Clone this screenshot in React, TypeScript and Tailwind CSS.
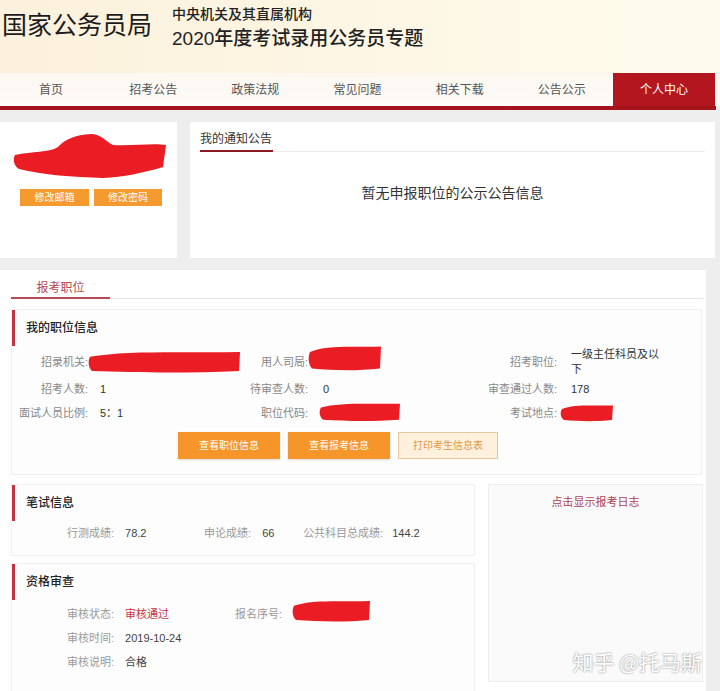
import React from "react";

const navItems = ["首页", "招考公告", "政策法规", "常见问题", "相关下载", "公告公示", "个人中心"];

// red marker scribbles drawn over private data in the screenshot
function Scribble({ w, h, d, className = "" }: { w: number; h: number; d: string; className?: string }) {
  return (
    <svg width={w} height={h} viewBox={`0 0 ${w} ${h}`} className={"shrink-0 " + className}>
      <path d={d} fill="#ea1d25" />
    </svg>
  );
}

function band(w: number, h: number) {
  return `M2 ${h * 0.3} C${w * 0.25} ${h * 0.05} ${w * 0.6} ${h * 0.15} ${w - 2} ${h * 0.12} L${w - 3} ${h * 0.85} C${w * 0.6} ${h * 0.95} ${w * 0.3} ${h * 0.9} 4 ${h * 0.85} C0 ${h * 0.7} 0 ${h * 0.45} 2 ${h * 0.3} Z`;
}

function SectionTitle({ children }: { children: React.ReactNode }) {
  return (
    <div className="h-[36px] border-l-[3px] border-[#c0353f] pl-[11px] flex items-center text-[12px] font-medium text-[#222]">
      {children}
    </div>
  );
}

export default function App() {
  return (
    <div className="relative w-[720px] h-[691px] overflow-hidden bg-[#eeeeee] font-['Liberation_Sans','Noto_Sans_CJK_SC',sans-serif]">
      {/* header */}
      <div className="h-[73px] flex items-start bg-gradient-to-r from-[#fbf1dc] via-[#fdf6e4] to-[#fefbec]">
        <h1 className="w-[170px] ml-[2px] mt-[10px] text-[25px] leading-[30px] text-[#1c1c1c]">国家公务员局</h1>
        <div className="mt-[5px] text-[#222]">
          <p className="text-[14px] leading-[18px] font-medium">中央机关及其直属机构</p>
          <p className="mt-[4px] text-[19px] leading-[24px] font-medium">2020年度考试录用公务员专题</p>
        </div>
      </div>

      {/* nav */}
      <div className="bg-gradient-to-b from-[#fcf8f1] to-[#fdfbf8]">
        <div className="flex w-[715px] h-[33px]">
          {navItems.map((n, i) =>
            i === navItems.length - 1 ? (
              <div key={n} className="flex-1 flex items-center justify-center text-[12px] bg-[#b3161e] text-white">
                {n}
              </div>
            ) : (
              <div key={n} className="flex-1 flex items-center justify-center text-[12px] text-[#555]">
                {n}
              </div>
            )
          )}
        </div>
      </div>
      <div className="h-[4px] w-[716px] bg-[#a5141c]" />

      {/* top cards */}
      <div className="flex gap-[13px] mt-[12px] h-[136px]">
        <div className="w-[177px] bg-white flex flex-col items-start pl-[13px] pt-[11px]">
          <Scribble
            w={154}
            h={46}
            d="M2 22 C20 18 35 20 45 14 C52 6 62 2 78 1 C88 1 92 8 100 12 C120 13 140 10 153 12 L150 34 C130 40 110 44 90 45 C60 44 30 42 6 36 C0 32 0 26 2 22 Z"
          />
          <div className="flex gap-[5px] mt-[10px] ml-[7px]">
            <div className="w-[69px] h-[17px] bg-[#f59a2f] text-white text-[10px] flex items-center justify-center">修改邮箱</div>
            <div className="w-[68px] h-[17px] bg-[#f59a2f] text-white text-[10px] flex items-center justify-center">修改密码</div>
          </div>
        </div>
        <div className="w-[525px] bg-white px-[10px] pt-[5px]">
          <div className="flex border-b border-[#ececec]">
            <div className="w-[73px] h-[25px] flex items-center text-[12px] text-[#333] border-b-2 border-[#8b1a24] mb-[-1px]">
              我的通知公告
            </div>
          </div>
          <div className="flex justify-center mt-[31px] text-[14px] text-[#333]">暂无申报职位的公示公告信息</div>
        </div>
      </div>

      {/* main panel */}
      <div className="mt-[12px] w-[706px] h-[421px] bg-white pt-[8px]">
        <div className="mx-[11px] mr-[3px] border-b border-[#e6e6e6] flex">
          <div className="w-[99px] h-[21px] mb-[-1px] border-b-2 border-[#b54a55] flex items-center justify-center text-[12px] text-[#b54a55]">
            报考职位
          </div>
        </div>

        {/* 我的职位信息 */}
        <div className="ml-[11px] mr-[4px] mt-[10px] h-[166px] border border-[#f0f0f0] bg-[#fdfdfd]">
          <SectionTitle>我的职位信息</SectionTitle>
          <div className="text-[11px]">
            <div className="flex items-center h-[30px] mt-[1px]">
              <div className="w-[76px] text-right text-[#888]">招录机关:</div>
              <div className="ml-[12px] w-[128px] flex items-center">
                <Scribble w={154} h={26} className="ml-[-12px]" d={band(154, 26)} />
              </div>
              <div className="w-[80px] text-right text-[#888]">用人司局:</div>
              <div className="ml-[15px] w-[134px] flex items-center">
                <Scribble w={75} h={30} className="ml-[-15px] mt-[-8px]" d={band(75, 30)} />
              </div>
              <div className="w-[100px] text-right text-[#888]">招考职位:</div>
              <div className="ml-[14px] w-[92px] leading-[15px] text-[#333]">一级主任科员及以下</div>
            </div>
            <div className="flex items-center h-[24px]">
              <div className="w-[76px] text-right text-[#888]">招考人数:</div>
              <div className="ml-[12px] w-[128px] text-[#333]">1</div>
              <div className="w-[80px] text-right text-[#888]">待审查人数:</div>
              <div className="ml-[15px] w-[134px] text-[#333]">0</div>
              <div className="w-[100px] text-right text-[#888]">审查通过人数:</div>
              <div className="ml-[14px] w-[92px] text-[#333]">178</div>
            </div>
            <div className="flex items-center h-[24px]">
              <div className="w-[76px] text-right text-[#888]">面试人员比例:</div>
              <div className="ml-[12px] w-[128px] text-[#333]">5：1</div>
              <div className="w-[80px] text-right text-[#888]">职位代码:</div>
              <div className="ml-[15px] w-[134px] flex items-center">
                <Scribble w={83} h={22} className="ml-[-4px] mt-[-2px]" d={band(83, 22)} />
              </div>
              <div className="w-[100px] text-right text-[#888]">考试地点:</div>
              <div className="ml-[14px] w-[92px] flex items-center">
                <Scribble w={55} h={20} className="ml-[-11px]" d={band(55, 20)} />
              </div>
            </div>
          </div>
          <div className="flex gap-[8px] ml-[166px] mt-[7px]">
            <div className="w-[102px] h-[27px] bg-[#f5952a] shadow-[0_1px_2px_rgba(0,0,0,0.15)] text-white text-[10px] flex items-center justify-center">
              查看职位信息
            </div>
            <div className="w-[102px] h-[27px] bg-[#f5952a] shadow-[0_1px_2px_rgba(0,0,0,0.15)] text-white text-[10px] flex items-center justify-center">
              查看报考信息
            </div>
            <div className="w-[100px] h-[27px] bg-[#fdf0dd] border border-[#e8c79b] text-[#e39a3e] text-[10px] flex items-center justify-center">
              打印考生信息表
            </div>
          </div>
        </div>

        {/* bottom */}
        <div className="flex gap-[13px] ml-[11px] mt-[9px]">
          <div className="w-[464px] flex flex-col gap-[7px]">
            <div className="h-[72px] border border-[#f0f0f0] bg-[#fdfdfd]">
              <SectionTitle>笔试信息</SectionTitle>
              <div className="flex items-center h-[24px] text-[11px] pl-[55px]">
                <span className="text-[#999]">行测成绩:</span>
                <span className="ml-[11px] w-[79px] text-[#444]">78.2</span>
                <span className="text-[#999]">申论成绩:</span>
                <span className="ml-[11px] w-[41px] text-[#444]">66</span>
                <span className="text-[#999]">公共科目总成绩:</span>
                <span className="ml-[9px] text-[#444]">144.2</span>
              </div>
            </div>
            <div className="h-[130px] border border-[#f0f0f0] bg-[#fdfdfd]">
              <SectionTitle>资格审查</SectionTitle>
              <div className="text-[11px] pl-[55px] mt-[2px]">
                <div className="flex items-center h-[24px]">
                  <span className="text-[#999]">审核状态:</span>
                  <span className="ml-[11px] w-[110px] text-[#c6333f]">审核通过</span>
                  <span className="text-[#999]">报名序号:</span>
                  <Scribble w={80} h={26} className="ml-[10px] mt-[-6px]" d={band(80, 26)} />
                </div>
                <div className="flex items-center h-[24px]">
                  <span className="text-[#999]">审核时间:</span>
                  <span className="ml-[11px] text-[#444]">2019-10-24</span>
                </div>
                <div className="flex items-center h-[24px]">
                  <span className="text-[#999]">审核说明:</span>
                  <span className="ml-[11px] text-[#444]">合格</span>
                </div>
              </div>
            </div>
          </div>
          <div className="w-[215px] h-[198px] border border-[#eeeeee] bg-[#fafafa] flex justify-center pt-[9px]">
            <span className="text-[11px] leading-[16px] text-[#b04050]">点击显示报考日志</span>
          </div>
        </div>
      </div>

      {/* watermark */}
      <div className="absolute right-[18px] bottom-[18px] text-[21px] leading-[24px] text-white [text-shadow:0_0_2px_rgba(0,0,0,0.55)] font-['Noto_Sans_CJK_SC',sans-serif]">
        知乎 @托马斯
      </div>
    </div>
  );
}
